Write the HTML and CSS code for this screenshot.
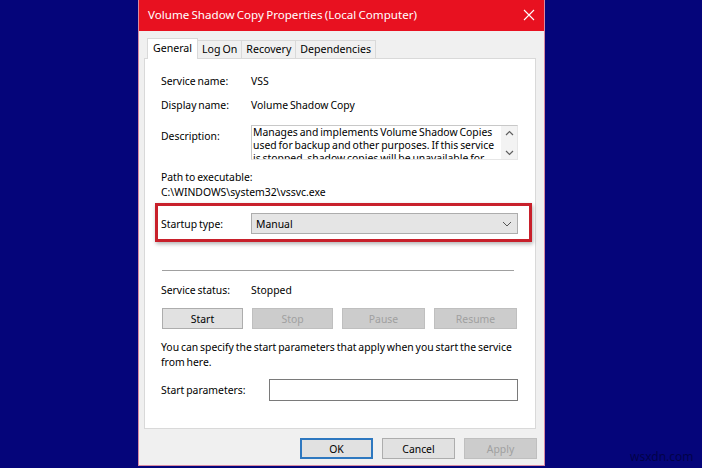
FILE: index.html
```html
<!DOCTYPE html>
<html>
<head>
<meta charset="utf-8">
<link rel="stylesheet" href="styles.css">
</head>
<body>
<div class="window">
  <div class="titlebar">
    <span class="title">Volume Shadow Copy Properties (Local Computer)</span>
    <svg class="close" width="12" height="12" viewBox="0 0 12 12"><path d="M1 1L11 11M11 1L1 11" stroke="#fff" stroke-width="1.1" fill="none"/></svg>
  </div>
  <div class="content">
    <div class="tabs">
      <div class="tab active">General</div>
      <div class="tab">Log On</div>
      <div class="tab">Recovery</div>
      <div class="tab">Dependencies</div>
    </div>
    <div class="panel">
      <div class="row r1"><span class="label">Service name:</span><span>VSS</span></div>
      <div class="row r2"><span class="label">Display name:</span><span>Volume Shadow Copy</span></div>
      <div class="row desc-row">
        <span class="label desc-label">Description:</span>
        <div class="desc-box">
          <div class="desc-text">Manages and implements Volume Shadow Copies used for backup and other purposes. If this service is stopped, shadow copies will be unavailable for backup and the backup may fail.</div>
          <div class="scroll">
            <svg width="9" height="6" viewBox="0 0 9 6"><path d="M1 5L4.5 1.5L8 5" stroke="#606060" stroke-width="1.2" fill="none"/></svg>
            <svg width="9" height="6" viewBox="0 0 9 6"><path d="M1 1L4.5 4.5L8 1" stroke="#606060" stroke-width="1.2" fill="none"/></svg>
          </div>
        </div>
      </div>
      <div class="path-label">Path to executable:</div>
      <div class="path">C:\WINDOWS\system32\vssvc.exe</div>
      <div class="row startup">
        <span class="label">Startup type:</span>
        <div class="combo"><span>Manual</span>
          <svg width="10" height="6" viewBox="0 0 10 6"><path d="M1 1L5 5L9 1" stroke="#555" stroke-width="1" fill="none"/></svg>
        </div>
        <div class="highlight"></div>
      </div>
      <div class="separator"></div>
      <div class="row status"><span class="label">Service status:</span><span>Stopped</span></div>
      <div class="svc-buttons">
        <div class="btn">Start</div>
        <div class="btn disabled">Stop</div>
        <div class="btn disabled">Pause</div>
        <div class="btn disabled">Resume</div>
      </div>
      <p class="note">You can specify the start parameters that apply when you start the service from here.</p>
      <div class="row params"><span class="label wide">Start parameters:</span><div class="input"></div></div>
    </div>
    <div class="footer">
      <div class="btn fbtn default">OK</div>
      <div class="btn fbtn">Cancel</div>
      <div class="btn fbtn disabled">Apply</div>
    </div>
  </div>
</div>
<div class="watermark">wsxdn.com</div>
</body>
</html>
```

FILE: styles.css
```css
* { box-sizing: border-box; }
html, body { margin: 0; padding: 0; }
body {
  width: 702px;
  height: 468px;
  overflow: hidden;
  background: #05057a;
  font-family: "Noto Sans", "Open Sans", sans-serif;
  font-size: 10.4px;
  word-spacing: -0.8px;
  color: #000;
  position: relative;
}
.window {
  margin-left: 138px;
  width: 407px;
  height: 466px;
  border: 1px solid #d98aa3;
  border-top: none;
  background: #f0f0f0;
  display: flex;
  flex-direction: column;
}
.titlebar {
  height: 31px;
  background: #e81120;
  display: flex;
  align-items: center;
  justify-content: space-between;
  padding: 0 9px 2px 9px;
  color: #fff;
}
.title { font-size: 11.6px; }
.content {
  flex: 1;
  display: flex;
  flex-direction: column;
  padding: 7px 8px 0 5px;
}
.tabs {
  height: 20px;
  display: flex;
  align-items: flex-end;
  padding-left: 3px;
  position: relative;
  z-index: 1;
}
.tab {
  height: 18px;
  line-height: 16px;
  border: 1px solid #d9d9d9;
  border-bottom: none;
  border-left: none;
  background: #f0f0f0;
  padding: 0 4px 0 4px;
  font-size: 10.6px;
}
.tab.active {
  height: 21px;
  margin-bottom: -1px;
  background: #fff;
  border-left: 1px solid #d9d9d9;
  line-height: 19px;
  padding: 0 5px 0 5px;
}
.panel {
  height: 371px;
  background: #fff;
  border: 1px solid #d9d9d9;
  padding: 14px 0 0 16px;
}
.row {
  display: flex;
  align-items: center;
  line-height: 16px;
}
.label { width: 90px; flex-shrink: 0; }
.label.wide { width: 108px; }
.r2 { margin-top: 8px; }
.desc-row { margin-top: 12px; align-items: flex-start; }
.desc-label { margin-top: 3px; }
.desc-box {
  width: 267px;
  height: 35px;
  border: 1px solid #c8c8c8;
  border-right-color: #e6e6e6;
  border-bottom-color: #e6e6e6;
  display: flex;
  overflow: hidden;
}
.desc-text {
  flex: 1;
  padding: 0 0 0 1px;
  line-height: 13px;
}
.scroll {
  width: 16px;
  flex-shrink: 0;
  background: #f3f3f3;
  display: flex;
  flex-direction: column;
  align-items: center;
  justify-content: space-between;
  padding: 4px 0 3px;
}
.path-label { margin-top: 10px; line-height: 15px; }
.path { line-height: 15px; }
.startup { margin-top: 13px; position: relative; }
.combo {
  width: 267px;
  height: 21px;
  background: #e5e5e5;
  border: 1px solid #adadad;
  display: flex;
  align-items: center;
  justify-content: space-between;
  padding: 0 5px 0 4px;
}
.highlight {
  position: absolute;
  left: -6px;
  top: -10px;
  width: 377px;
  height: 39px;
  border: 3px solid #c8202b;
  box-shadow: 1px 2px 4px rgba(0,0,0,0.3);
  pointer-events: none;
}
.separator {
  margin: 36px 0 0 1px;
  width: 352px;
  height: 1px;
  background: #a0a0a0;
}
.status { margin-top: 11px; }
.svc-buttons {
  margin: 10px 0 0 1px;
  width: 355px;
  display: grid;
  grid-template-columns: 81px 81px 83px 83px;
  column-gap: 9px;
}
.btn {
  height: 21px;
  border: 1px solid #adadad;
  background: #e1e1e1;
  display: flex;
  align-items: center;
  justify-content: center;
}
.btn.disabled {
  background: #cccccc;
  border-color: #bfbfbf;
  color: #a0a0a0;
}
.note {
  margin: 11px 0 0 0;
  line-height: 15px;
  width: 365px;
}
.params { margin-top: 9px; }
.input {
  width: 249px;
  height: 22px;
  border: 1px solid #7a7a7a;
  background: #fff;
}
.footer {
  display: flex;
  justify-content: flex-end;
  gap: 9px;
  padding: 9px 0 0 0;
  margin-right: -1px;
}
.fbtn { width: 73px; }
.fbtn.default { border: 2px solid #2e78c0; }
.watermark {
  position: absolute;
  left: 630px;
  top: 448px;
  font-size: 12px;
  word-spacing: 0;
  color: rgba(0,0,20,0.5);
}
```
